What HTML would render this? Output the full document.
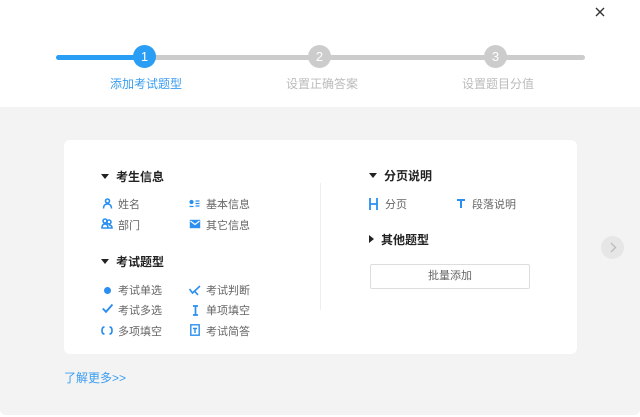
<!DOCTYPE html>
<html><head><meta charset="utf-8"><style>
*{margin:0;padding:0;box-sizing:border-box}
body{width:640px;height:417px;background:#fff;font-family:"Liberation Sans","Noto Sans CJK SC",sans-serif;position:relative;overflow:hidden}
.a{position:absolute}
.gray{left:0;top:107px;width:640px;height:308px;background:#f3f3f3;border-radius:0 0 6px 6px}
.card{left:64px;top:140px;width:513px;height:214px;background:#fff;border-radius:6px}
.h{font-size:12px;font-weight:bold;color:#222;white-space:nowrap}
.t{font-size:11px;color:#666;white-space:nowrap}
svg.ic{position:absolute;width:11px;height:11px;fill:none;stroke:#2a8ff0;stroke-width:1.6}
.tri{display:inline-block;width:0;height:0;border-left:4px solid transparent;border-right:4px solid transparent;border-top:5px solid #222;margin-right:7px;vertical-align:2px}
.trr{display:inline-block;width:0;height:0;border-top:4px solid transparent;border-bottom:4px solid transparent;border-left:5px solid #222;margin-right:7px;vertical-align:1px}
.circ{width:23px;height:23px;border-radius:50%;color:#fff;font-size:13px;text-align:center;line-height:23px}
</style></head><body>
<svg class="a" style="left:595px;top:7px" width="10" height="10" viewBox="0 0 10 10"><path d="M1 1L9 9M9 1L1 9" stroke="#333" stroke-width="1.4"/></svg>
<div class="a" style="left:56px;top:55px;width:90px;height:5px;background:#2a9df4;border-radius:3px"></div>
<div class="a" style="left:146px;top:55px;width:439px;height:5px;background:#ccc;border-radius:3px"></div>
<div class="a circ" style="left:133px;top:45px;background:#2a9df4">1</div>
<div class="a circ" style="left:308px;top:45px;background:#ccc">2</div>
<div class="a circ" style="left:484px;top:45px;background:#ccc">3</div>
<div class="a t" style="left:110px;top:75px;color:#3a9df0;font-size:12px">添加考试题型</div>
<div class="a t" style="left:286px;top:75px;color:#bbb;font-size:12px">设置正确答案</div>
<div class="a t" style="left:462px;top:75px;color:#bbb;font-size:12px">设置题目分值</div>
<div class="a gray"></div>
<div class="a card"></div>
<div class="a" style="left:320px;top:183px;width:1px;height:127px;background:#eee"></div>
<div class="a h" style="left:101px;top:168px"><span class="tri"></span>考生信息</div>
<div class="a h" style="left:101px;top:253px"><span class="tri"></span>考试题型</div>
<div class="a h" style="left:369px;top:167px"><span class="tri"></span>分页说明</div>
<div class="a h" style="left:369px;top:231px"><span class="trr"></span>其他题型</div>

<svg class="ic" style="left:102px;top:198px" viewBox="0 0 11 11"><circle cx="5.5" cy="3" r="2"/><path d="M1.5 10.5Q1.5 6 5.5 6Q9.5 6 9.5 10.5"/></svg>
<div class="a t" style="left:118px;top:196px">姓名</div>
<svg class="ic" style="left:189px;top:198px" viewBox="0 0 11 11"><circle cx="2.5" cy="4" r="1.3" fill="#2a8ff0"/><path d="M0.5 8.5h4M6.5 3h4M6.5 5.5h4M6.5 8h4" stroke-width="1.3"/></svg>
<div class="a t" style="left:206px;top:196px">基本信息</div>
<svg class="ic" style="left:101px;top:218px;width:12px" viewBox="0 0 12 11"><circle cx="4" cy="3" r="2"/><circle cx="8" cy="4" r="2"/><path d="M1 10Q1 6 4 6Q7 6 7 10ZM7 10h4Q11 7 8 7"/></svg>
<div class="a t" style="left:118px;top:217px">部门</div>
<svg class="ic" style="left:189px;top:219px;width:12px;height:10px" viewBox="0 0 12 10"><rect x="0.8" y="0.8" width="10.4" height="8.4" fill="#2a8ff0" stroke="none"/><path d="M1.5 2L6 5.5L10.5 2" stroke="#fff" stroke-width="1.2"/></svg>
<div class="a t" style="left:206px;top:217px">其它信息</div>

<span class="a" style="left:104px;top:287px;width:7px;height:7px;border-radius:50%;background:#2a8ff0"></span><div class="a t" style="left:118px;top:282px">考试单选</div>
<svg class="ic" style="left:189px;top:285px;width:12px" viewBox="0 0 12 11"><path d="M0.5 4L3.5 8L11 1M5 5.5L9 10"/></svg>
<div class="a t" style="left:206px;top:282px">考试判断</div>
<svg class="ic" style="left:102px;top:303px" viewBox="0 0 11 11"><path d="M0.8 5.5L4 8.8L10.5 1.5" stroke-width="1.9"/></svg>
<div class="a t" style="left:118px;top:302px">考试多选</div>
<svg class="ic" style="left:190px;top:305px" viewBox="0 0 11 11"><path d="M3 1h5M3 10h5M5.5 1v9" stroke-width="1.7"/></svg>
<div class="a t" style="left:206px;top:302px">单项填空</div>
<svg class="ic" style="left:101px;top:326px;width:12px;height:9px" viewBox="0 0 12 9"><path d="M3.5 1Q1 1 1 4.5Q1 8 3.5 8M8.5 1Q11 1 11 4.5Q11 8 8.5 8" stroke-width="1.7"/></svg>
<div class="a t" style="left:118px;top:323px">多项填空</div>
<svg class="ic" style="left:190px;top:324px;width:10px;height:12px" viewBox="0 0 10 12"><rect x="0.8" y="0.8" width="8.4" height="10.4" stroke-width="1.4"/><path d="M3 4.5h4M5 4.5v4.5" stroke-width="1.4"/></svg>
<div class="a t" style="left:206px;top:323px">考试简答</div>

<svg class="ic" style="left:369px;top:198px;width:9px;height:12px" viewBox="0 0 9 12"><path d="M1 0v12M8 0v12M1 6h7" stroke-width="1.8"/></svg>
<div class="a t" style="left:385px;top:196px">分页</div>
<svg class="ic" style="left:457px;top:199px;width:8px;height:9px" viewBox="0 0 8 9"><path d="M0 1h8M4 1v8" stroke-width="2"/></svg>
<div class="a t" style="left:472px;top:196px">段落说明</div>
<div class="a" style="left:370px;top:264px;width:160px;height:25px;border:1px solid #ddd;border-radius:2px;font-size:11px;color:#666;text-align:center;line-height:23px">批量添加</div>
<div class="a" style="left:601px;top:236px;width:23px;height:23px;border-radius:50%;background:#e6e6e6"></div>
<svg class="a" style="left:609px;top:242px" width="8" height="11" viewBox="0 0 8 11"><path d="M2 1L6.5 5.5L2 10" fill="none" stroke="#bbb" stroke-width="1.3"/></svg>
<div class="a" style="left:64px;top:369px;font-size:12px;color:#3a9df0">了解更多&gt;&gt;</div>
</body></html>
